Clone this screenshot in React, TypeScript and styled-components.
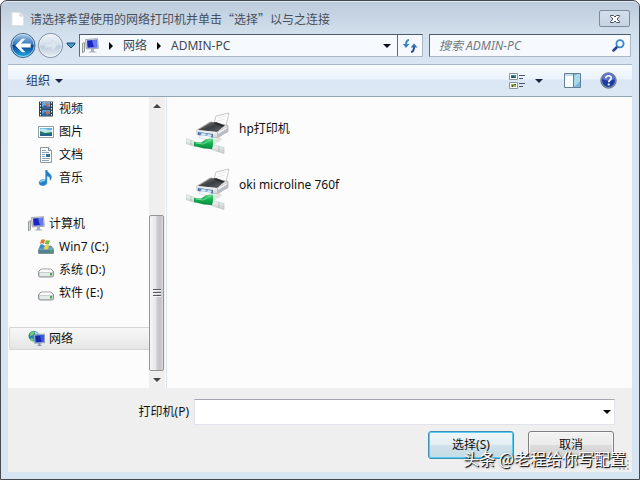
import React from "react";
import styled, { createGlobalStyle, css } from "styled-components";

const GlobalStyle = createGlobalStyle`
  *, *::before, *::after { box-sizing: border-box; }
  body { margin: 0; background: #ffffff; }
  body, button, input, select {
    font-family: "Noto Sans", "Noto Sans CJK SC", sans-serif;
    font-size: 12px;
    line-height: 16px;
  }
  svg { display: block; flex: none; }
`;

const Dialog = styled.div`
  position: relative;
  display: flex;
  flex-direction: column;
  min-height: 100vh;
  padding: 0 7px 7px;
  border: 1px solid #47474f;
  border-radius: 7px 7px 0 0;
  background: linear-gradient(#bccbdb 0, #d3e0ed 34px, #d9e5f2 64px, #d7e4f2 100%);
  box-shadow: inset 0 1px 0 #dfe9f2;
  overflow: hidden;
`;

const TitleBar = styled.header`
  display: flex;
  align-items: center;
  gap: 6px;
  height: 33px;
  padding: 2px 2px 0 3px;
`;

const Title = styled.h1`
  flex: 1;
  margin: 0;
  font-family: "Noto Sans CJK SC", sans-serif;
  font-size: 12px;
  font-weight: 400;
  color: #46505c;
`;

const CloseButton = styled.button`
  display: grid;
  place-items: center;
  width: 31px;
  height: 17px;
  padding: 0;
  border: 1px solid #7d8b9d;
  border-radius: 2px;
  background: linear-gradient(#d3deea, #c5d3e2);
`;

const NavRow = styled.div`
  display: flex;
  align-items: center;
  height: 23px;
  margin-bottom: 7px;
`;

const HistoryButtons = styled.div`
  display: flex;
  align-items: center;
  width: 71px;
  padding-left: 1px;
`;

const PlainButton = styled.button`
  display: flex;
  align-items: center;
  padding: 0;
  border: 0;
  background: none;
  color: inherit;
`;

const HistoryMenuButton = styled(PlainButton)`
  margin-left: 2px;
`;

const fieldFrame = css`
  display: flex;
  align-items: center;
  height: 23px;
  border: 1px solid #a9b7c7;
  border-top-color: #4e5a68;
  border-left-color: #5c6977;
  background: #f6f9fd;
`;

const AddressBar = styled.nav`
  ${fieldFrame}
  flex: 1;
  gap: 10px;
  padding-left: 2px;
  color: #3d4753;
`;

const AddressEnd = styled.div`
  display: flex;
  align-items: center;
  gap: 6px;
  height: 21px;
  margin-left: auto;
`;

const RefreshButton = styled(PlainButton)`
  justify-content: center;
  width: 25px;
  height: 21px;
  border-left: 1px solid #5c6977;
`;

const SearchBox = styled.label`
  ${fieldFrame}
  width: 202px;
  margin: 0 1px 0 6px;
  padding: 0 5px 0 9px;
`;

const SearchInput = styled.input`
  flex: 1;
  min-width: 0;
  padding: 0;
  border: 0;
  outline: 0;
  background: none;
  font-style: italic;
  &::placeholder { color: #6f7780; opacity: 1; }
`;

const Toolbar = styled.div`
  display: flex;
  align-items: center;
  height: 33px;
  padding: 0 15px 0 18px;
  border-top: 1px solid #a9b8c9;
  border-bottom: 1px solid #94a3b6;
  background: linear-gradient(#fafcff 0, #eaf2fb 14px, #dce7f5 15px, #dde8f5 100%);
  color: #1e395b;
`;

const OrganizeButton = styled(PlainButton)`
  gap: 5px;
`;

const ToolbarEnd = styled.div`
  display: flex;
  align-items: center;
  margin-left: auto;
`;

const ViewButton = styled(PlainButton)`
  gap: 9px;
  margin-right: 21px;
`;

const PreviewButton = styled(PlainButton)`
  margin-right: 19px;
`;

const Content = styled.div`
  display: flex;
  flex: 1;
  background: #fcfcfc;
`;

const Sidebar = styled.nav`
  width: 141px;
  padding-left: 1px;
`;

const TreeGroup = styled.ul`
  margin: 0 0 23px;
  padding: 0;
  list-style: none;
  &:last-child { margin-bottom: 0; }
`;

const TreeItem = styled.a<{ $level: number; $selected?: boolean }>`
  display: flex;
  align-items: center;
  gap: ${(p) => (p.$level === 0 ? 4 : 5)}px;
  height: 23px;
  padding-left: ${(p) => (p.$level === 0 ? 19 : 29)}px;
  color: #111111;
  text-decoration: none;
  ${(p) =>
    p.$selected &&
    css`
      padding-left: 18px;
      border: 1px solid #d5d5d5;
      border-right: 0;
      border-radius: 2px 0 0 2px;
      background: linear-gradient(#f8f8f8, #e5e5e5);
    `}
`;

const ScrollTrack = styled.div`
  display: flex;
  flex-direction: column;
  width: 16px;
  background: #efefef;
`;

const ScrollButton = styled.button`
  display: grid;
  place-items: center;
  height: 17px;
  padding: 0;
  border: 0;
  background: none;
`;

const ScrollThumb = styled.div`
  display: grid;
  place-items: center;
  width: 15px;
  height: 156px;
  margin-top: auto;
  border: 1px solid #949494;
  border-radius: 2px;
  background: linear-gradient(90deg, #f5f5f5 0, #e7e7e9 45%, #cbcbd0 55%, #c3c3c9 80%, #dadade 100%);
`;

const FileList = styled.ul`
  flex: 1;
  margin: 0 0 0 1px;
  padding: 13px 19px;
  border-left: 1px solid #dde3ec;
  list-style: none;
`;

const FileItem = styled.li`
  display: flex;
  gap: 9px;
  height: 56px;
  color: #111111;
`;

const FileName = styled.span`
  padding-top: 11px;
`;

const Footer = styled.form`
  padding: 11px 17px 0 18px;
  height: 84px;
  background: #efefef;
  color: #111111;
`;

const FieldRow = styled.div`
  display: flex;
  align-items: center;
  gap: 5px;
`;

const FieldLabel = styled.label`
  flex: 0 0 163px;
  text-align: right;
`;

const SelectWrap = styled.div`
  display: grid;
  flex: 1;
  align-items: center;
  > * { grid-area: 1 / 1; }
  > svg { justify-self: end; margin-right: 4px; pointer-events: none; }
`;

const PrinterSelect = styled.select`
  width: 100%;
  height: 26px;
  appearance: none;
  padding: 0 20px 0 4px;
  border: 1px solid #e2e3ea;
  border-top-color: #a5a8ae;
  border-radius: 0;
  background: #ffffff;
`;

const ButtonRow = styled.div`
  display: flex;
  justify-content: flex-end;
  gap: 14px;
  margin: 6px 1px 0 0;
`;

const PushButton = styled.button<{ $primary?: boolean }>`
  width: 86px;
  height: 28px;
  padding: 0;
  border: 1px solid ${(p) => (p.$primary ? "#3c8fb5" : "#808080")};
  border-radius: 3px;
  box-shadow: inset 0 0 0 1px ${(p) => (p.$primary ? "#56cdf2" : "#f8f8f8")};
  background: ${(p) =>
    p.$primary
      ? "linear-gradient(#f0f6f9 0, #e4eff4 48%, #cfe1e9 52%, #c5dce6 100%)"
      : "linear-gradient(#f2f2f2 0, #ebebeb 48%, #dddddd 52%, #cfcfcf 100%)"};
  color: #111111;
`;

const Watermark = styled.div`
  position: absolute;
  right: 13px;
  bottom: 9px;
  font-family: "Noto Sans CJK SC", sans-serif;
  font-size: 16px;
  line-height: 24px;
  color: #ffffff;
  text-shadow: 1px 1px 0 #222222, 1px 1px 2px #333333;
  pointer-events: none;
`;

const SizeGrip = styled.div`
  position: absolute;
  right: 9px;
  bottom: 8px;
`;

const Caret = ({ direction = "down", color = "#1c2440" }: { direction?: "down" | "right" | "up"; color?: string }) => {
  if (direction === "right") {
    return <svg width="4" height="8" viewBox="0 0 4 8" aria-hidden="true"><path d="M0 0l4 4-4 4z" fill="#080808" /></svg>;
  }
  return (
    <svg width="8" height="4" viewBox="0 0 8 4" aria-hidden="true">
      <path d={direction === "up" ? "M0 4l4-4 4 4z" : "M0 0h8L4 4z"} fill={color} />
    </svg>
  );
};

const PageIcon = () => (
  <svg width="13" height="16" viewBox="0 0 13 16" aria-hidden="true">
    <path d="M1 1.5h8l3.5 3.5v9.5H1z" fill="#fff" stroke="#e0e3e6" />
    <path d="M9 1.5V5h3.5" fill="#eef0f2" stroke="#c7cdd3" />
  </svg>
);

const CloseIcon = () => (
  <svg width="12" height="10" viewBox="0 0 12 10" aria-hidden="true">
    <path d="M1.500 1.500h3L6 3l1.500-1.500h3v1L8 5l2.500 2.500v1h-3L6 7 4.500 8.500h-3v-1L4 5 1.500 2.500z" fill="#fff" stroke="#4a5262" />
  </svg>
);

const HistoryIcon = ({ forward = false }: { forward?: boolean }) => (
  <svg width={forward ? 27 : 28} height="27" viewBox="0 0 28 28" aria-hidden="true">
    <defs>
      <linearGradient id="backFill" x2="0" y2="1">
        <stop offset="0" stopColor="#a9c9e8" /><stop offset=".45" stopColor="#3778bd" />
        <stop offset=".5" stopColor="#083f8e" /><stop offset="1" stopColor="#25b5ea" />
      </linearGradient>
      <linearGradient id="forwardFill" x2="0" y2="1">
        <stop offset="0" stopColor="#edf3f8" /><stop offset=".48" stopColor="#d3dfea" />
        <stop offset=".52" stopColor="#bccbdb" /><stop offset="1" stopColor="#e9f0f7" />
      </linearGradient>
    </defs>
    <circle cx="14" cy="14" r="12.5" fill={`url(#${forward ? "forwardFill" : "backFill"})`} stroke={forward ? "#75859a" : "#44618a"} />
    <circle cx="14" cy="14" r="11.5" fill="none" stroke="#fff" opacity=".55" />
    {forward
      ? <path d="M21 14l-6-6v4H8v4h7v4z" fill="#dce6ef" stroke="#c8d3df" strokeWidth=".5" />
      : <path d="M6 14l7-7h3.500l-4.700 5H22v4H11.800l4.700 5H13z" fill="#fff" />}
  </svg>
);

const HistoryCaret = () => (
  <svg width="10" height="7" viewBox="0 0 10 7" aria-hidden="true">
    <path d="M1 1h8v1L5 6 1 2z" fill="#459acb" stroke="#174b7a" />
  </svg>
);

const ComputerIcon = () => (
  <svg width="17" height="16" viewBox="0 0 17 16" aria-hidden="true">
    <path d="M.5 5.500l2-.8v9l-2 .8z" fill="#d9dfdf" stroke="#7d8580" strokeWidth=".8" />
    <path d="M3.500 1.500l12-.8.8 9.600-12 .6z" fill="#d8dce5" stroke="#81899a" strokeWidth=".7" />
    <path d="M5 2.500l9.800-.7.5 7.400-9.800.5z" fill="#1b25c4" />
    <path d="M10 2.200l4.800-.4.5 7.400-3.300.2z" fill="#637ae9" />
    <path d="M9 11h3v2l3 1.500H6L9 13z" fill="#a9b1bf" />
  </svg>
);

const RefreshIcon = () => (
  <svg width="16" height="14" viewBox="0 0 16 14" aria-hidden="true">
    <path d="M7 1C4.500 1.300 4 3 4 6" fill="none" stroke="#3a8bcc" strokeWidth="2" />
    <path d="M.8 5h6.600L4 9z" fill="#3b83c5" />
    <path d="M9 13c2.500-.3 3-2 3-5" fill="none" stroke="#1d4e92" strokeWidth="2" />
    <path d="M8.600 8.500L12 4.500l3.500 4z" fill="#2e6db1" />
  </svg>
);

const SearchIcon = () => (
  <svg width="13" height="13" viewBox="0 0 13 13" aria-hidden="true">
    <path d="M1.500 11.500L5.500 7.500" stroke="#28408d" strokeWidth="2.500" strokeLinecap="round" />
    <circle cx="8" cy="4.800" r="3.600" fill="#edf8ff" stroke="#3d88c8" strokeWidth="1.800" />
  </svg>
);

const ViewIcon = () => (
  <svg width="17" height="16" viewBox="0 0 17 16" aria-hidden="true">
    <g fill="#fff" stroke="#8795a3"><path d="M.5.5h8v6h-8zM.5 9.500h8v6h-8z" /></g>
    <path d="M2 2h5v3H2z" fill="#3a87aa" /><path d="M2 4l2-1 3 2H2z" fill="#17533f" />
    <path d="M2 11h5v3H2z" fill="#a9b52d" /><path d="M3 12h1v2H3zM5 11h2v1H5z" fill="#315a30" />
    <path d="M10 2.500h6M10 5.500h4M10 10.500h6M10 13.500h4" stroke="#44566f" />
  </svg>
);

const PreviewIcon = () => (
  <svg width="17" height="15" viewBox="0 0 17 15" aria-hidden="true">
    <path d="M.5.5h16v14H.5z" fill="#fbfdff" stroke="#667f98" />
    <path d="M1 2h15" stroke="#9db1c4" />
    <path d="M10 1h6v13h-6z" fill="#73bddb" /><path d="M10 3l4-2h2v7l-6 6z" fill="#a9daeb" />
    <path d="M9.500 1v13" stroke="#54829c" />
  </svg>
);

const HelpIcon = () => (
  <svg width="17" height="17" viewBox="0 0 17 17" aria-hidden="true">
    <circle cx="8.500" cy="8.500" r="7.700" fill="#8394b7" stroke="#5f6c87" />
    <circle cx="8.500" cy="8.500" r="6.500" fill="#1d3ca0" />
    <path d="M2.500 7a6 6 0 0112 0c-3 2-8 2-12 0z" fill="#5975cc" />
    <path d="M5.800 6.200c0-3.300 5.600-3.200 5.400 0 0 2-2.500 1.900-2.500 4" fill="none" stroke="#fff" strokeWidth="1.700" />
    <circle cx="8.700" cy="12.500" r="1.100" fill="#fff" />
  </svg>
);

const VideoIcon = () => (
  <svg width="16" height="16" viewBox="0 0 16 16" aria-hidden="true">
    <path d="M1 .5h14v15H1z" fill="#34434e" />
    <path d="M4 1h8v7H4z" fill="#6aa8de" /><path d="M4 9h8v6H4z" fill="#5c9bd4" />
    <path d="M4 6l3-2 5 2v2H4zM4 13l3-2 5 2v2H4z" fill="#35649a" />
    <path d="M8 2l3 1-1 3-2-1zM8 10l3 1-1 3-2-1z" fill="#b9705f" />
    <path d="M2.500 1v15M13.500 1v15" stroke="#e5edf2" strokeDasharray="1.500 1.500" />
  </svg>
);

const ImageIcon = () => (
  <svg width="16" height="16" viewBox="0 0 16 16" aria-hidden="true">
    <path d="M.5 2.500h15v11H.5z" fill="#fff" stroke="#949ea5" />
    <path d="M2 4h12v8H2z" fill="#68b4de" /><path d="M2 5c4-2 7 2 12 1v3H2z" fill="#bfe5ef" />
    <path d="M2 7l5 2 7-1v4H2z" fill="#26785e" /><path d="M2 10h12v2H2z" fill="#1f628c" />
  </svg>
);

const DocumentIcon = () => (
  <svg width="16" height="16" viewBox="0 0 16 16" aria-hidden="true">
    <path d="M2.500.5h8l3 3v12h-11z" fill="#fff" stroke="#8f98a0" />
    <path d="M10.500.5v3h3" fill="#dfe5ea" stroke="#7f8992" />
    <path d="M4 3.500h4M4 5.500h7M4 7.500h3M4 9.500h3M4 11.500h8M4 13.500h7" stroke="#8aa3b6" />
    <path d="M8 7h4v3H8z" fill="#356b99" />
  </svg>
);

const MusicIcon = () => (
  <svg width="16" height="16" viewBox="0 0 16 16" aria-hidden="true">
    <path d="M7.500 0H9c.3 3 5 3.500 4.500 8-.5 1.500-1 2-1.500 2.500.5-3-1-4-3-4.500v6.500c0 4.200-8 4-8 .5 0-2.800 3.300-4.200 6.500-3z" fill="#247fc5" stroke="#51a5da" strokeWidth=".5" />
    <path d="M2.500 12.500c.5-1.700 3-2.500 4.500-1.500" fill="none" stroke="#96dcf6" strokeWidth="1.300" />
  </svg>
);

const DriveIcon = ({ system = false }: { system?: boolean }) => (
  <svg width="16" height="16" viewBox="0 0 16 16" aria-hidden="true">
    {system ? (
      <>
        <path d="M1 10l2-3h10l2.500 3v4.500H.5V10z" fill="#70a4b9" stroke="#587584" strokeWidth=".7" />
        <path d="M1 11h14v3H1z" fill="#567f95" />
        <path d="M3 1c2-1.300 3-.7 4 0L6 5C5 4 4 4 2 5z" fill="#e37631" />
        <path d="M8 1c1.500.8 3 .6 4 0l-1 4c-1 .6-2.500.7-4 0z" fill="#78b83b" />
        <path d="M2 6c1.500-1 2.500-.7 4 0l-1 4c-1-1-2.500-.9-4 0z" fill="#378dce" />
        <path d="M7 6c1.500.8 3 .6 4 0l-1 4c-1 .6-2.500.7-4 0z" fill="#f7d43e" />
      </>
    ) : (
      <>
        <path d="M.5 9.500L3 7h10l2.500 2.500V14l-1 1H1.500l-1-1z" fill="#c9cdd0" stroke="#7d8287" strokeWidth=".8" />
        <path d="M3 7.500h10l1.500 2.500h-13z" fill="#fbfbfb" /><path d="M2 11h12v3H2z" fill="#e6e9e9" />
      </>
    )}
    <path d="M12 11h2v2.500h-2z" fill="#44af45" />
  </svg>
);

const NetworkIcon = () => (
  <svg width="17" height="17" viewBox="0 0 17 17" aria-hidden="true">
    <circle cx="5.800" cy="6" r="5.300" fill="#2186a8" />
    <path d="M2 3c2-2 4-2 5-1L5 5 2 6zM3 8l3 1-1 3-3-2z" fill="#77c77c" />
    <path d="M7 1.500c2 .5 3 2 4 4L7 6z" fill="#a9e1dc" />
    <path d="M6 4.700l10.500-.6v8.600l-10 .5z" fill="#ccd7e7" stroke="#7383a7" strokeWidth=".7" />
    <path d="M7 5.500l8.700-.5v7L7.500 12.500z" fill="#1428b4" /><path d="M12 5.200l3.700-.2v7l-2.200.1z" fill="#3c5be0" />
    <path d="M10.500 13h2v2l2 1h-6l2-1z" fill="#8895ad" />
  </svg>
);

const PrinterIcon = () => (
  <svg width="44" height="46" viewBox="0 0 44 46" aria-hidden="true">
    <defs>
      <linearGradient id="lidFill" x2="1" y2="1">
        <stop offset="0" stopColor="#85898e" /><stop offset=".5" stopColor="#3d4043" /><stop offset="1" stopColor="#5e6266" />
      </linearGradient>
      <linearGradient id="cableFill" x2="0" y2="1">
        <stop offset="0" stopColor="#5cd68c" /><stop offset=".45" stopColor="#18b153" /><stop offset="1" stopColor="#06893a" />
      </linearGradient>
      <linearGradient id="pipeFill" x2="0" y2="1">
        <stop offset="0" stopColor="#f7f9f8" /><stop offset="1" stopColor="#c3cbc7" />
      </linearGradient>
    </defs>
    <path d="M28 14l2-8 13-3-3 13z" fill="#fdfdfd" stroke="#b9b9b9" strokeWidth=".8" />
    <path d="M32 8l8-2M31 11l8-2" stroke="#e6e6e6" strokeWidth=".8" />
    <path d="M11 20l13-8 4 .5 14 3v6L31 28l-20-3.500z" fill="#dcdee0" stroke="#92969a" strokeWidth=".6" />
    <path d="M12 20l13-8 5 1 8 3-7 6z" fill="url(#lidFill)" />
    <path d="M27 13l3-1 9 3.500-3 1.500z" fill="#2a2c2f" />
    <path d="M31 22l11-6v5.500L31 28z" fill="#b9bcc0" />
    <path d="M32 22l9-5v1.500L32 24z" fill="#f2f3f4" />
    <path d="M11 20l20 2v2.500l-20-3z" fill="#e9ebed" />
    <path d="M12 22l15 2v3.500L12 25z" fill="#4c7caa" />
    <path d="M14 24l3-1 4 1-3 2zM20 25l3-1 3 1-2 2z" fill="#d4e7f6" />
    <path d="M15 25l10 1.500-2 3.500-10-2z" fill="#f8fafc" stroke="#c3ccd4" strokeWidth=".5" />
    <path d="M26 30l8-3 2 3-9 5z" fill="#dfe4e2" />
    <path d="M0 28.500l10 3.500v5L0 33.500z" fill="url(#pipeFill)" stroke="#bac2bf" strokeWidth=".5" />
    <path d="M24 34l14 3.500v6L24 39z" fill="url(#pipeFill)" stroke="#b2bbb7" strokeWidth=".5" />
    <path d="M33 36.500v5.500M5 30.500v5" stroke="#aeb8b3" strokeWidth=".7" />
    <path d="M8 32l7 .5L20 29l7-.5V35l-1 4-8-.500L8 36z" fill="url(#cableFill)" />
    <path d="M10 33l7 1 8-4" fill="none" stroke="#8be6ac" strokeWidth=".8" />
  </svg>
);

const libraryItems = [
  { label: "视频", icon: <VideoIcon /> },
  { label: "图片", icon: <ImageIcon /> },
  { label: "文档", icon: <DocumentIcon /> },
  { label: "音乐", icon: <MusicIcon /> },
];

const driveItems = [
  { label: "Win7 (C:)", icon: <DriveIcon system /> },
  { label: "系统 (D:)", icon: <DriveIcon /> },
  { label: "软件 (E:)", icon: <DriveIcon /> },
];

const printers = ["hp打印机", "oki microline 760f"];

export default function App() {
  return (
    <>
      <GlobalStyle />
      <Dialog role="dialog" aria-labelledby="dialog-title">
        <TitleBar>
          <PageIcon />
          <Title id="dialog-title">请选择希望使用的网络打印机并单击“选择”以与之连接</Title>
          <CloseButton aria-label="关闭"><CloseIcon /></CloseButton>
        </TitleBar>

        <NavRow>
          <HistoryButtons>
            <PlainButton aria-label="后退"><HistoryIcon /></PlainButton>
            <PlainButton aria-label="前进"><HistoryIcon forward /></PlainButton>
            <HistoryMenuButton aria-label="历史记录"><HistoryCaret /></HistoryMenuButton>
          </HistoryButtons>
          <AddressBar aria-label="地址">
            <ComputerIcon />
            <Caret direction="right" />
            <PlainButton>网络</PlainButton>
            <Caret direction="right" />
            <PlainButton>ADMIN-PC</PlainButton>
            <AddressEnd>
              <PlainButton aria-label="以前的位置"><Caret color="#080b1c" /></PlainButton>
              <RefreshButton aria-label="刷新"><RefreshIcon /></RefreshButton>
            </AddressEnd>
          </AddressBar>
          <SearchBox>
            <SearchInput type="search" aria-label="搜索 ADMIN-PC" placeholder="搜索 ADMIN-PC" />
            <SearchIcon />
          </SearchBox>
        </NavRow>

        <Toolbar>
          <OrganizeButton>组织<Caret /></OrganizeButton>
          <ToolbarEnd>
            <ViewButton aria-label="更改视图"><ViewIcon /><Caret /></ViewButton>
            <PreviewButton aria-label="预览窗格"><PreviewIcon /></PreviewButton>
            <PlainButton aria-label="帮助"><HelpIcon /></PlainButton>
          </ToolbarEnd>
        </Toolbar>

        <Content>
          <Sidebar aria-label="导航窗格">
            <TreeGroup>
              {libraryItems.map((item) => (
                <li key={item.label}><TreeItem href="#" $level={1}>{item.icon}{item.label}</TreeItem></li>
              ))}
            </TreeGroup>
            <TreeGroup>
              <li><TreeItem href="#" $level={0}><ComputerIcon />计算机</TreeItem></li>
              {driveItems.map((item) => (
                <li key={item.label}><TreeItem href="#" $level={1}>{item.icon}{item.label}</TreeItem></li>
              ))}
            </TreeGroup>
            <TreeGroup>
              <li><TreeItem href="#" $level={0} $selected><NetworkIcon />网络</TreeItem></li>
            </TreeGroup>
          </Sidebar>
          <ScrollTrack>
            <ScrollButton aria-label="向上滚动"><Caret direction="up" color="#444444" /></ScrollButton>
            <ScrollThumb>
              <svg width="8" height="8" viewBox="0 0 8 8" aria-hidden="true">
                <path d="M0 .5h8M0 3.500h8M0 6.500h8" stroke="#55585c" />
                <path d="M0 1.500h8M0 4.500h8M0 7.500h8" stroke="#f5f5f5" />
              </svg>
            </ScrollThumb>
            <ScrollButton aria-label="向下滚动"><Caret color="#444444" /></ScrollButton>
          </ScrollTrack>
          <FileList>
            {printers.map((name) => (
              <FileItem key={name}><PrinterIcon /><FileName>{name}</FileName></FileItem>
            ))}
          </FileList>
        </Content>

        <Footer onSubmit={(e: React.FormEvent) => e.preventDefault()}>
          <FieldRow>
            <FieldLabel htmlFor="printer">打印机(P)</FieldLabel>
            <SelectWrap>
              <PrinterSelect id="printer" defaultValue="">
                <option value="" />
                {printers.map((name) => <option key={name}>{name}</option>)}
              </PrinterSelect>
              <Caret color="#080808" />
            </SelectWrap>
          </FieldRow>
          <ButtonRow>
            <PushButton type="submit" $primary>选择(S)</PushButton>
            <PushButton type="button">取消</PushButton>
          </ButtonRow>
        </Footer>

        <SizeGrip>
          <svg width="11" height="11" viewBox="0 0 11 11" aria-hidden="true">
            <path d="M8 0h2v2H8zM4 4h2v2H4zM8 4h2v2H8zM0 8h2v2H0zM4 8h2v2H4zM8 8h2v2H8z" fill="#b9bdc4" />
          </svg>
        </SizeGrip>
        <Watermark>头条 @老程给你写配置</Watermark>
      </Dialog>
    </>
  );
}
